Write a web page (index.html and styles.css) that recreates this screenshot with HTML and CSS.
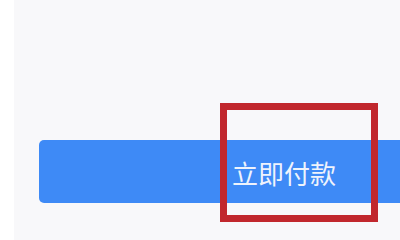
FILE: index.html
```html
<!DOCTYPE html>
<html lang="zh-CN">
<head>
<meta charset="utf-8">
<link rel="stylesheet" href="styles.css">
</head>
<body>
<div class="screen">
  <div class="edge"></div>
  <main class="content">
    <button class="pay-btn">立即付款</button>
  </main>
  <div class="annotation"></div>
</div>
</body>
</html>
```
FILE: styles.css
```css
html, body {
  margin: 0;
  padding: 0;
  width: 400px;
  height: 240px;
  overflow: hidden;
  background: #f8f8fa;
}
.screen {
  position: relative;
  display: flex;
  width: 400px;
  height: 240px;
  overflow: hidden;
  font-family: "Noto Sans CJK SC", "Noto Sans", sans-serif;
}
.edge {
  flex: 0 0 14px;
  background: #ffffff;
}
.content {
  flex: 1 1 auto;
  min-width: 0;
  background: #f8f8fa;
  padding: 140px 0 0 25px;
  box-sizing: border-box;
}
.pay-btn {
  display: block;
  box-sizing: border-box;
  width: 490px;
  height: 63px;
  border: none;
  border-radius: 5px;
  background: #3e8af6;
  color: #eef3fc;
  font-family: "Noto Sans CJK SC", "Noto Sans", sans-serif;
  font-size: 26px;
  line-height: 61px;
  padding: 2px 0 0 0;
  text-align: center;
}
.annotation {
  position: absolute;
  left: 220px;
  top: 103px;
  width: 158px;
  height: 119px;
  box-sizing: border-box;
  border: 7px solid #c1272d;
}
```
